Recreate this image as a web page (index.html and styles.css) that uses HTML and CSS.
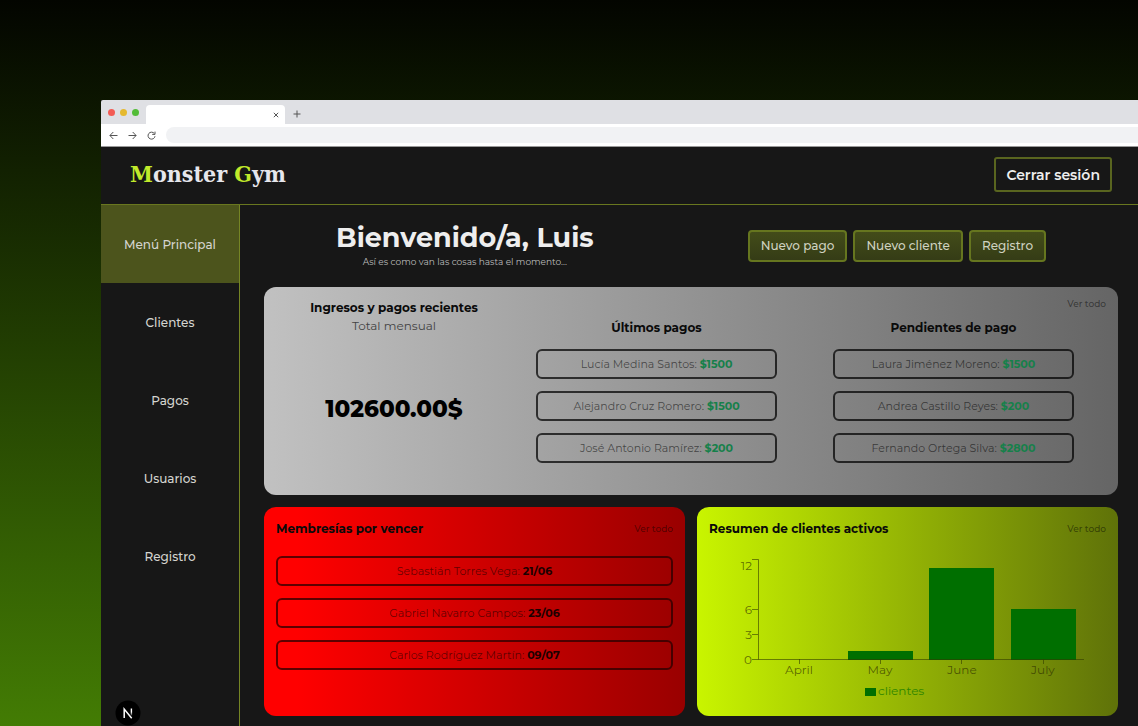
FILE: index.html
```html
<!DOCTYPE html>
<html lang="es">
<head>
<meta charset="utf-8">
<title>Monster Gym</title>
<link rel="stylesheet" href="styles.css">
</head>
<body>
<div class="window">
  <div class="tabbar">
    <div class="lights"><i class="light red"></i><i class="light amber"></i><i class="light green"></i></div>
    <div class="tab">
      <button class="tool" aria-label="Cerrar pestaña"><svg width="6" height="6" viewBox="0 0 6 6"><path d="M.8.8l4.400 4.400M5.200.8L.8 5.200"/></svg></button>
    </div>
    <button class="tool new-tab" aria-label="Nueva pestaña"><svg width="8" height="8" viewBox="0 0 8 8"><path d="M4 .5v7M.5 4h7"/></svg></button>
  </div>
  <div class="toolbar">
    <button class="tool" aria-label="Atrás"><svg width="9" height="9" viewBox="0 0 9 9"><path d="M8.500 4.500H1M4.300 1L.9 4.500 4.300 8"/></svg></button>
    <button class="tool" aria-label="Adelante"><svg width="9" height="9" viewBox="0 0 9 9"><path d="M.5 4.500H8M4.700 1l3.400 3.500L4.700 8"/></svg></button>
    <button class="tool" aria-label="Recargar"><svg width="9" height="9" viewBox="0 0 9 9"><path d="M7.300 2.500A3.500 3.500 0 1 0 8 5.200M8 .6v2.800H5.200"/></svg></button>
    <input class="address" type="text" aria-label="Dirección">
  </div>
  <header class="header">
    <a class="logo" href="#"><span>M</span>onster <span>G</span>ym</a>
    <button class="logout">Cerrar sesión</button>
  </header>
  <div class="body">
    <nav class="sidebar">
      <a class="nav-item active" href="#">Menú Principal</a>
      <a class="nav-item" href="#">Clientes</a>
      <a class="nav-item" href="#">Pagos</a>
      <a class="nav-item" href="#">Usuarios</a>
      <a class="nav-item" href="#">Registro</a>
      <button class="badge" aria-label="Next.js">
        <svg width="26" height="26" viewBox="0 0 26 26"><defs><linearGradient id="fade" x1="0" y1="0" x2="0" y2="1"><stop offset=".5" stop-color="#fff"/><stop offset="1" stop-color="#fff" stop-opacity=".2"/></linearGradient></defs><circle cx="13" cy="13" r="12.500" fill="#000"/><path d="M9.200 18V9l7.500 9.300" fill="none" stroke="#fff" stroke-width="1.500"/><rect x="15.700" y="8.500" width="1.400" height="7" fill="url(#fade)"/></svg>
      </button>
    </nav>
    <main class="main">
      <section class="welcome">
        <div class="greeting">
          <h1>Bienvenido/a, Luis</h1>
          <p>Así es como van las cosas hasta el momento...</p>
        </div>
        <div class="actions">
          <button class="action">Nuevo pago</button>
          <button class="action">Nuevo cliente</button>
          <button class="action">Registro</button>
        </div>
      </section>
      <section class="card income">
        <a class="more corner" href="#">Ver todo</a>
        <div class="total">
          <h2>Ingresos y pagos recientes</h2>
          <p class="caption">Total mensual</p>
          <p class="amount">102600.00$</p>
        </div>
        <div class="column">
          <h2>Últimos pagos</h2>
          <ul class="list">
            <li>Lucía Medina Santos: <b>$1500</b></li>
            <li>Alejandro Cruz Romero: <b>$1500</b></li>
            <li>José Antonio Ramírez: <b>$200</b></li>
          </ul>
        </div>
        <div class="column">
          <h2>Pendientes de pago</h2>
          <ul class="list">
            <li>Laura Jiménez Moreno: <b>$1500</b></li>
            <li>Andrea Castillo Reyes: <b>$200</b></li>
            <li>Fernando Ortega Silva: <b>$2800</b></li>
          </ul>
        </div>
      </section>
      <div class="pair">
        <section class="card expiring">
          <div class="card-head"><h2>Membresías por vencer</h2><a class="more" href="#">Ver todo</a></div>
          <ul class="list">
            <li>Sebastián Torres Vega: <b>21/06</b></li>
            <li>Gabriel Navarro Campos: <b>23/06</b></li>
            <li>Carlos Rodríguez Martín: <b>09/07</b></li>
          </ul>
        </section>
        <section class="card summary">
          <div class="card-head"><h2>Resumen de clientes activos</h2><a class="more" href="#">Ver todo</a></div>
          <svg class="chart" viewBox="0 0 397 156" role="img" aria-label="Clientes por mes">
            <g class="bars">
              <rect x="139" y="106" width="65" height="9"/>
              <rect x="220" y="23" width="65" height="92"/>
              <rect x="302" y="64" width="65" height="51"/>
              <rect x="156" y="143" width="11" height="8"/>
            </g>
            <path class="axis" d="M43 14.500h6.500v100M43 64.500h6M43 89.500h6M43 114.500h332M90.500 114v5M171.500 114v5M252.500 114v5M334.500 114v5"/>
            <g class="y-labels">
              <text x="43" y="25">12</text><text x="43" y="69">6</text><text x="43" y="94">3</text><text x="43" y="119">0</text>
            </g>
            <g class="x-labels">
              <text x="90" y="129">April</text><text x="171" y="129">May</text><text x="253" y="129">June</text><text x="334" y="129">July</text>
            </g>
            <text class="legend" x="169" y="150">clientes</text>
          </svg>
        </section>
      </div>
    </main>
  </div>
</div>
</body>
</html>
```
FILE: styles.css
```css
* { box-sizing: border-box; margin: 0; padding: 0; }

body {
  display: flex;
  min-height: 100vh;
  padding: 100px 0 0 101px;
  background: linear-gradient(#030500, #437c04);
  font-family: Montserrat, Inter, sans-serif;
  font-size: 12px;
  color: #eee;
}

button { font: inherit; color: inherit; background: none; border: 0; cursor: pointer; }
a { color: inherit; text-decoration: none; }
ul { list-style: none; }

.window { flex: 1; display: flex; flex-direction: column; background: #171717; }

/* Browser chrome */
.tabbar { display: flex; align-items: flex-end; height: 24px; background: #dfe0e4; border-top-left-radius: 2px; }
.lights { display: flex; gap: 5px; padding: 0 7px 8px 7px; }
.light { width: 7px; height: 7px; border-radius: 50%; }
.red { background: #f35b54; }
.amber { background: #e5b92f; }
.green { background: #53bd38; }
.tab { display: flex; align-items: center; justify-content: flex-end; width: 139px; height: 19px; padding-right: 6px; background: #fff; border-radius: 4px 4px 0 0; }
.tool { display: flex; }
.tool svg { fill: none; stroke: #555; stroke-width: 1; }
.new-tab { padding: 0 8px 6px; }
.toolbar { display: flex; align-items: center; gap: 10px; height: 23px; padding: 0 0 0 8px; background: #fff; border-bottom: 1px solid #999; }
.address { flex: 1; height: 16px; border: 0; border-radius: 8px 0 0 8px; background: #f1f2f4; }

.header { display: flex; align-items: center; justify-content: space-between; height: 58px; padding: 0 26px 2px 29px; border-bottom: 1px solid #69771f; }
.logo { font-family: "DejaVu Serif", serif; font-stretch: condensed; font-weight: bold; font-size: 23px; line-height: 28px; padding-bottom: 2px; color: #e6e6ec; }
.logo span { color: #c1ea2b; }
.logout { height: 35px; padding: 0 10px; border: 2px solid #59651f; border-radius: 3px; font-size: 14px; font-weight: 600; }

.body { flex: 1; display: flex; }
.sidebar { position: relative; width: 139px; border-right: 1px solid #758524; }
.nav-item { display: flex; align-items: center; justify-content: center; height: 78px; font-size: 12px; font-weight: 500; color: #d5d5d0; }
.active { background: #4c541c; }
.badge { position: absolute; left: 14px; bottom: 0; display: flex; }

.main { flex: 1; display: flex; flex-direction: column; gap: 12px; padding: 15px 20px 10px 24px; }
.welcome { display: flex; align-items: center; justify-content: space-between; height: 52px; margin-bottom: 3px; padding: 0 72px; }
.greeting { text-align: center; }
.greeting h1 { font-size: 27px; line-height: 32px; }
.greeting p { font-size: 9px; line-height: 16px; color: #bbb; }
.actions { display: flex; gap: 6px; }
.action { height: 32px; padding: 0 11px 2px; border: 2px solid #66761f; border-radius: 4px; background: linear-gradient(#434c19, #353c16); font-size: 12px; font-weight: 500; color: #cfd2c0; }

.card { position: relative; min-height: 208px; padding: 12px; border-radius: 12px; color: #0a0a0a; }
.card h2 { font-size: 12px; line-height: 18px; }
.more { font-size: 9px; line-height: 14px; font-weight: 500; color: rgba(0, 0, 0, .48); }
.corner { position: absolute; top: 10px; right: 12px; }
.income { display: grid; grid-template-columns: 232fr 297fr 297fr; padding-right: 16px; background: linear-gradient(to right, #c1c1c1, #656565); }
.total { display: flex; flex-direction: column; align-items: center; padding-left: 4px; }
.caption { font-size: 12px; line-height: 18px; color: #444; }
.amount { flex: 1; display: flex; align-items: center; font-size: 23px; font-weight: 800; color: #000; }
.column { display: flex; flex-direction: column; align-items: center; gap: 12px; padding-top: 20px; }
.list { display: flex; flex-direction: column; gap: 12px; width: 100%; }
.column .list { width: 81%; }
.list li { height: 30px; border: 2px solid rgba(0, 0, 0, .72); border-radius: 6px; font-size: 11px; line-height: 26px; text-align: center; color: rgba(0, 0, 0, .56); }
.income b { color: #16804a; }

.pair { flex: 1; display: grid; grid-template-columns: 1fr 1fr; gap: 12px; }
.card-head { display: flex; align-items: center; justify-content: space-between; padding-top: 1px; }
.expiring { background: linear-gradient(to right, #f00 8%, #990000); }
.expiring .list { margin-top: 18px; }
.expiring li { border-color: rgba(40, 0, 0, .75); }
.expiring b { color: #1c0000; }
.summary { background: linear-gradient(to right, #c9f500, #5f7209); }
.chart { display: block; width: 100%; margin-top: 7px; font-size: 12px; }
.bars { fill: #006f00; }
.axis { fill: none; stroke: rgba(50, 60, 0, .6); }
.y-labels, .x-labels { fill: rgba(40, 40, 0, .65); }
.y-labels { text-anchor: end; }
.x-labels { text-anchor: middle; }
.legend { fill: #2f8600; }
```
